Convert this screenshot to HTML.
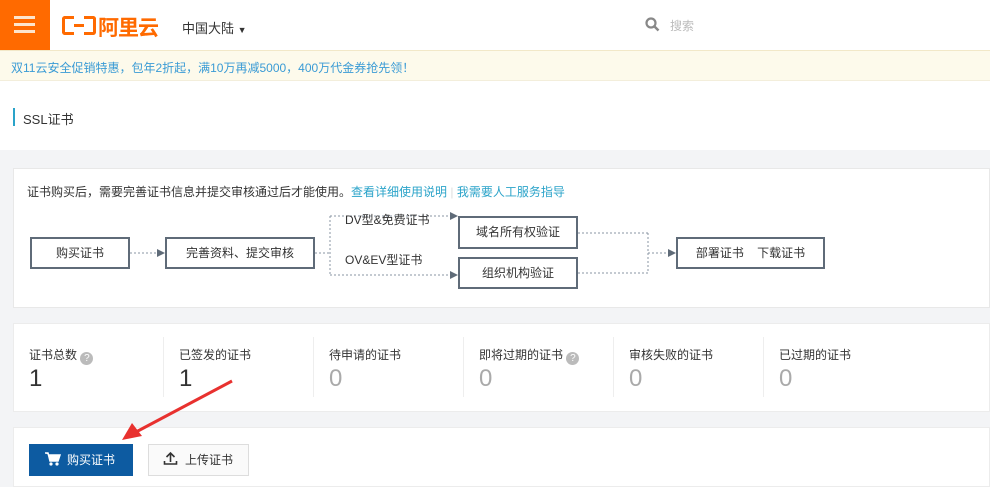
<!DOCTYPE html><html><head><meta charset="utf-8"><style>
*{margin:0;padding:0;box-sizing:border-box}
body{width:990px;height:481px;overflow:hidden;background:#f3f4f6;font-family:"Liberation Sans","Noto Sans CJK SC",sans-serif;font-size:12px;color:#333;position:relative}
.a{position:absolute}
.box{position:absolute;border:2px solid #5f6b78;background:#fff;text-align:center;font-size:12px;color:#333}
</style></head><body>
<div class="a" style="left:0;top:0;width:990px;height:50px;background:#fff"></div>
<div class="a" style="left:0;top:0;width:50px;height:50px;background:#ff6a00"></div>
<div class="a" style="left:14px;top:16px;width:21px;height:3px;background:#fde4cc;box-shadow:0 7px 0 #fde4cc,0 14px 0 #fde4cc"></div>
<div class="a" style="left:62px;top:16px;width:12px;height:19px;border:3.5px solid #ff6a00;border-right:none;border-radius:3px 0 0 3px"></div>
<div class="a" style="left:84px;top:16px;width:12px;height:19px;border:3.5px solid #ff6a00;border-left:none;border-radius:0 3px 3px 0"></div>
<div class="a" style="left:74px;top:24px;width:10px;height:3px;background:#ff6a00"></div>
<div class="a" style="left:98px;top:12px;font-size:21px;font-weight:bold;color:#ff6a00;letter-spacing:-1px">阿里云</div>
<div class="a" style="left:182px;top:18px;font-size:13px">中国大陆 <span style="font-size:9px">▼</span></div>
<svg class="a" style="left:645px;top:17px" width="15" height="15"><circle cx="6" cy="6" r="4.5" stroke="#888" stroke-width="2.2" fill="none"/><path d="M9.5 9.5L13.5 13.5" stroke="#888" stroke-width="2.5"/></svg>
<div class="a" style="left:670px;top:17px;color:#bbb;font-size:12px">搜索</div>
<div class="a" style="left:0;top:50px;width:990px;height:31px;background:#fdfaeb;border-top:1px solid #f2e8c8;border-bottom:1px solid #f3eedb"></div>
<div class="a" style="left:11px;top:59px;color:#3a9bd5;font-size:12px">双11云安全促销特惠，包年2折起，满10万再减5000，400万代金券抢先领！</div>
<div class="a" style="left:0;top:81px;width:990px;height:69px;background:#fff"></div>
<div class="a" style="left:13px;top:108px;width:2px;height:18px;background:#2aa3c9"></div>
<div class="a" style="left:23px;top:109px;font-size:13px">SSL证书</div>
<div class="a" style="left:13px;top:168px;width:977px;height:140px;background:#fff;border:1px solid #e8e8e8"></div>
<div class="a" style="left:27px;top:183px;font-size:12px">证书购买后，需要完善证书信息并提交审核通过后才能使用。<span style="color:#2aa3c9">查看详细使用说明</span> <span style="color:#ddd">|</span> <span style="color:#2aa3c9">我需要人工服务指导</span></div>
<svg class="a" style="left:0;top:0" width="990" height="320">
<g stroke="#8a96a3" stroke-width="1" stroke-dasharray="2,2" fill="none">
<path d="M130 253H158"/><path d="M315 253H330M330 216V275M330 216H450M330 275H450"/>
<path d="M578 233H648M578 273H648M648 233V273M648 253H668"/></g>
<g fill="#5f6b78"><path d="M157 249L165 253L157 257Z"/><path d="M450 212L458 216L450 220Z"/><path d="M450 271L458 275L450 279Z"/><path d="M668 249L676 253L668 257Z"/></g>
</svg>
<div class="box" style="left:30px;top:237px;width:100px;height:32px;line-height:28px">购买证书</div>
<div class="box" style="left:165px;top:237px;width:150px;height:32px;line-height:28px">完善资料、提交审核</div>
<div class="box" style="left:458px;top:216px;width:120px;height:33px;line-height:29px">域名所有权验证</div>
<div class="box" style="left:458px;top:257px;width:120px;height:32px;line-height:28px">组织机构验证</div>
<div class="box" style="left:676px;top:237px;width:149px;height:32px;line-height:28px">部署证书&nbsp;&nbsp;&nbsp;&nbsp;下载证书</div>
<div class="a" style="left:345px;top:211px">DV型&amp;免费证书</div>
<div class="a" style="left:345px;top:251px">OV&amp;EV型证书</div>
<div class="a" style="left:13px;top:323px;width:977px;height:89px;background:#fff;border:1px solid #ececec"></div>
<div class="a" style="left:163px;top:337px;width:1px;height:60px;background:#eee;box-shadow:150px 0 #eee,300px 0 #eee,450px 0 #eee,600px 0 #eee"></div>
<div class="a" style="left:29px;top:346px">证书总数 <span style="display:inline-block;width:13px;height:13px;border-radius:50%;background:#bbb;color:#fff;font-size:10px;text-align:center;line-height:13px;vertical-align:-2px">?</span></div>
<div class="a" style="left:179px;top:346px">已签发的证书</div>
<div class="a" style="left:329px;top:346px">待申请的证书</div>
<div class="a" style="left:479px;top:346px">即将过期的证书 <span style="display:inline-block;width:13px;height:13px;border-radius:50%;background:#bbb;color:#fff;font-size:10px;text-align:center;line-height:13px;vertical-align:-2px">?</span></div>
<div class="a" style="left:629px;top:346px">审核失败的证书</div>
<div class="a" style="left:779px;top:346px">已过期的证书</div>
<div class="a" style="left:29px;top:365px;font-size:24px;color:#333">1</div>
<div class="a" style="left:179px;top:365px;font-size:24px;color:#333">1</div>
<div class="a" style="left:329px;top:365px;font-size:24px;color:#aaa">0</div>
<div class="a" style="left:479px;top:365px;font-size:24px;color:#aaa">0</div>
<div class="a" style="left:629px;top:365px;font-size:24px;color:#aaa">0</div>
<div class="a" style="left:779px;top:365px;font-size:24px;color:#aaa">0</div>
<div class="a" style="left:13px;top:427px;width:977px;height:60px;background:#fff;border:1px solid #ececec"></div>
<div class="a" style="left:29px;top:444px;width:104px;height:32px;background:#0d5ba1;color:#fff;font-size:12px;line-height:32px;padding-left:38px">购买证书</div>
<svg class="a" style="left:45px;top:451px" width="16" height="16"><path d="M0 2H3L5 10H13L15 4H4" fill="#fff" stroke="#fff" stroke-width="1.5"/><circle cx="6" cy="13" r="1.6" fill="#fff"/><circle cx="12" cy="13" r="1.6" fill="#fff"/></svg>
<div class="a" style="left:148px;top:444px;width:101px;height:32px;background:#fafafa;border:1px solid #ddd;line-height:30px;padding-left:36px">上传证书</div>
<svg class="a" style="left:163px;top:451px" width="15" height="15"><path d="M7.5 11V2M3.5 6L7.5 2L11.5 6M1.5 10V13H13.5V10" stroke="#333" stroke-width="1.6" fill="none"/></svg>
<svg class="a" style="left:0;top:0" width="990" height="481"><path d="M232 381L136 432" stroke="#e8312f" stroke-width="3"/><path d="M122 440L132 423L142 436Z" fill="#e8312f"/></svg>
</body></html>
